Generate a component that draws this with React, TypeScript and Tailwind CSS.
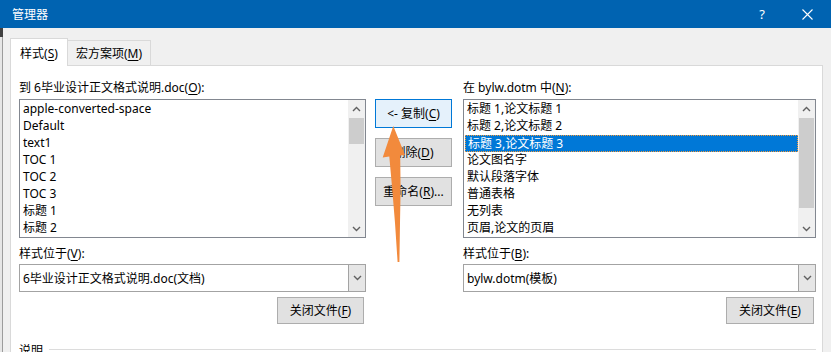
import React from "react";

const leftItems = [
  "apple-converted-space",
  "Default",
  "text1",
  "TOC 1",
  "TOC 2",
  "TOC 3",
  "标题 1",
  "标题 2",
];

const rightItems = [
  "标题 1,论文标题 1",
  "标题 2,论文标题 2",
  "标题 3,论文标题 3",
  "论文图名字",
  "默认段落字体",
  "普通表格",
  "无列表",
  "页眉,论文的页眉",
];

function K({ k }: { k: string }) {
  return <span className="underline underline-offset-[2px]">{k}</span>;
}

function Chevron({ up }: { up?: boolean }) {
  return (
    <svg width="9" height="6" viewBox="0 0 9 6" className="block">
      <path
        d={up ? "M1 5 L4.5 1.5 L8 5" : "M1 1 L4.5 4.5 L8 1"}
        fill="none"
        stroke="#606060"
        strokeWidth="1.4"
      />
    </svg>
  );
}

function ScrollBar({ thumb }: { thumb: string }) {
  return (
    <div className="flex w-[17px] flex-col bg-[#f0f0f0]">
      <div className="flex h-[17px] items-center justify-center">
        <Chevron up />
      </div>
      <div className="flex-1 pt-px">
        <div className={`mx-px bg-[#cdcdcd] ${thumb}`} />
      </div>
      <div className="flex h-[17px] items-center justify-center">
        <Chevron />
      </div>
    </div>
  );
}

function ListBox({
  items,
  selected,
  thumb,
}: {
  items: string[];
  selected?: number;
  thumb: string;
}) {
  return (
    <div className="flex h-[139px] border border-[#828790] bg-white">
      <div className="flex-1 pt-px pl-px">
        {items.map((it, i) => (
          <div
            key={it}
            className={`h-[17px] px-[2px] leading-[16px] whitespace-nowrap ${
              i === selected
                ? "border border-dotted border-[#f59a3a] bg-[#0078d7] px-[1px] text-white"
                : "text-black"
            }`}
          >
            {it}
          </div>
        ))}
      </div>
      <ScrollBar thumb={thumb} />
    </div>
  );
}

function Combo({ text }: { text: string }) {
  return (
    <div className="flex h-[28px] border border-[#a3a3a3] bg-white">
      <div className="flex flex-1 items-center pl-[3px] whitespace-nowrap">{text}</div>
      <div className="flex w-[17px] items-center justify-center border-l border-[#a3a3a3] bg-[#e6e6e6]">
        <Chevron />
      </div>
    </div>
  );
}

function Btn({
  children,
  focused,
  className = "",
}: {
  children: React.ReactNode;
  focused?: boolean;
  className?: string;
}) {
  return (
    <div
      className={`flex items-center justify-center border whitespace-nowrap ${
        focused ? "border-[#0078d7] bg-[#e5f1fb]" : "border-[#adadad] bg-[#e1e1e1]"
      } ${className}`}
    >
      {children}
    </div>
  );
}

export default function App() {
  return (
    <div className="relative h-[352px] w-[831px] overflow-hidden bg-[#f0f0f0] font-['Noto_Sans','Noto_Sans_CJK_SC',sans-serif] text-[12px] leading-[17px] text-black">
      {/* title bar */}
      <div className="flex h-[28px] items-center bg-[#0063b1] text-white">
        <span className="pl-[12px]">管理器</span>
        <span className="ml-auto text-[13px]">?</span>
        <svg width="11" height="11" viewBox="0 0 11 11" className="mr-[18px] ml-[37px]">
          <path d="M0.5 0.5 L10.5 10.5 M10.5 0.5 L0.5 10.5" stroke="white" strokeWidth="1.1" />
        </svg>
      </div>

      <div className="flex">
        {/* edge of the window behind */}
        <div className="flex h-[324px] w-[3px] flex-col">
          <div className="h-[9px] bg-[#404040]" />
          <div className="flex-1 border-r border-[#9c9c9c] bg-[#e6e6e6]" />
        </div>

        <div className="pt-[10px] pl-[7px]">
          {/* tabs */}
          <div className="flex h-[27px] items-end">
            <div className="relative z-10 flex h-[28px] w-[58px] items-center justify-center self-start border border-b-0 border-[#d9d9d9] bg-white pt-[2px]">
              样式(<K k="S" />)
            </div>
            <div className="flex h-[25px] w-[83px] items-center justify-center border border-b-0 border-l-0 border-[#d9d9d9] bg-[#f0f0f0] pt-px">
              宏方案项(<K k="M" />)
            </div>
          </div>

          {/* panel */}
          <div className="h-[300px] w-[813px] border border-[#d9d9d9] bg-white pt-[11px] pr-[5px] pl-[8px]">
            <div className="flex">
              <div className="flex w-[347px] flex-col">
                <div className="flex h-[20px] items-center">
                  到 6毕业设计正文格式说明.doc(<K k="O" />):
                </div>
                <div className="mt-[2px]">
                  <ListBox items={leftItems} thumb="h-[26px]" />
                </div>
                <div className="mt-[5px] flex h-[20px] items-center">
                  样式位于(<K k="V" />):
                </div>
                <div className="mt-px">
                  <Combo text="6毕业设计正文格式说明.doc(文档)" />
                </div>
                <Btn className="mt-[5px] mr-[2px] h-[27px] w-[87px] self-end">
                  关闭文件(<K k="F" />)
                </Btn>
              </div>

              <div className="ml-[9px] flex w-[77px] flex-col gap-[10px] pt-[22px]">
                <Btn focused className="h-[29px]">
                  &lt;- 复制(<K k="C" />)
                </Btn>
                <Btn className="h-[29px]">
                  删除(<K k="D" />)
                </Btn>
                <Btn className="h-[29px]">
                  重命名(<K k="R" />)...
                </Btn>
              </div>

              <div className="ml-[11px] flex w-[353px] flex-col">
                <div className="flex h-[20px] items-center">
                  在 bylw.dotm 中(<K k="N" />):
                </div>
                <div className="mt-[2px]">
                  <ListBox items={rightItems} selected={2} thumb="h-[90px]" />
                </div>
                <div className="mt-[5px] flex h-[20px] items-center">
                  样式位于(<K k="B" />):
                </div>
                <div className="mt-px">
                  <Combo text="bylw.dotm(模板)" />
                </div>
                <Btn className="mt-[5px] mr-[2px] h-[27px] w-[88px] self-end">
                  关闭文件(<K k="E" />)
                </Btn>
              </div>
            </div>

            <div className="mt-[17px] flex h-[18px] items-center">
              <span>说明</span>
              <div className="mr-px ml-[6px] -mt-[2px] h-px flex-1 bg-[#dcdcdc]" />
            </div>
          </div>
        </div>
      </div>

      {/* annotation arrow */}
      <svg className="pointer-events-none absolute top-0 left-0" width="831" height="352">
        <path
          d="M393.3 126 L405 155 L400.2 155.5 L400.6 190 L400 223 L399.4 262 L397.6 262 L395 223 L392.3 190 L389.3 156.5 L382.7 157.5 Z"
          fill="#f28a3c"
        />
      </svg>
    </div>
  );
}
